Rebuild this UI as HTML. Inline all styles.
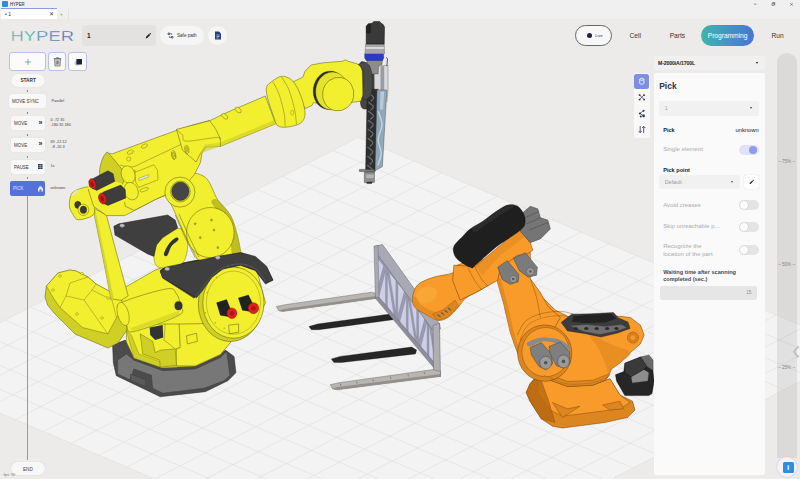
<!DOCTYPE html>
<html lang="en">
<head>
<meta charset="utf-8">
<title>HYPER</title>
<style>
*{box-sizing:border-box;margin:0;padding:0}
html,body{width:800px;height:479px;overflow:hidden}
body{background:#ecebea;font-family:"Liberation Sans","DejaVu Sans",sans-serif;color:#2c3345;position:relative}
.abs{position:absolute}
#titlebar{left:0;top:0;width:800px;height:19px;background:#f0f0f0}
#apptitle{left:10px;top:1px;font-size:4.9px;line-height:7px;color:#222;transform:scaleX(.86);transform-origin:0 0}
#appicon{left:2px;top:1px;width:6px;height:6px;background:#2f8fd6;border-radius:1px}
#tab{left:1px;top:8px;width:56px;height:11px;background:#fff;border-top:1px solid #8e9be0}
#tab span{position:absolute;left:4px;top:1px;font-size:5px;line-height:8px;color:#333}
#tabx{left:49px;top:10px;font-size:6px;line-height:8px;color:#444}
#tabplus{left:60px;top:10px;font-size:5px;line-height:8px;color:#999}
#tabsep{left:68px;top:9px;width:1px;height:10px;background:#e2e2e2}
.wc{top:1px;font-size:6px;line-height:7px;color:#333}
#scene{left:0;top:19px;width:800px;height:460px}
#logo{left:10px;top:28px;width:66px;height:15px}
#nameinput{left:82px;top:25px;width:74px;height:21px;background:#e3e2e1;border-radius:3px}
#nameinput span{position:absolute;left:5px;top:6px;font-size:6.5px;line-height:9px;font-weight:bold;color:#222}
#safepath{left:160px;top:26px;width:44px;height:19px;background:#f5f5f5;border-radius:10px}
#safepath span{position:absolute;left:17px;top:6.5px;font-size:4.6px;line-height:6px;color:#333}
#docbtn{left:208px;top:26px;width:19px;height:19px;background:#f5f5f5;border-radius:10px}
.sqbtn{top:52px;height:19px;background:#fbfbfb;border:1px solid #b9c0e6;border-radius:3px}
.node{background:#f8f8f8;border-radius:2px;font-size:5.2px;line-height:14px;color:#333;height:14px;box-shadow:0 0 1px rgba(0,0,0,.15)}
.node span{position:absolute;left:3px;top:0;font-size:5.6px;transform:scaleX(.8);transform-origin:0 50%;white-space:nowrap}
.pill{background:#f8f8f8;border-radius:7px;font-size:5.2px;line-height:13px;text-align:center;color:#222;box-shadow:0 0 1px rgba(0,0,0,.15)}
.ntxt{font-size:3.8px;line-height:5px;color:#444;white-space:pre}
.tick{left:27.200px;width:.6px;height:2.200px;background:#888}
#vline{left:27.100px;top:196px;width:.8px;height:264px;background:#9a9a9a}
.navtxt{top:29.8px;font-size:7.2px;line-height:12px;color:#333}
#live{left:575.3px;top:25.3px;width:36.6px;height:20.6px;border:.7px solid #666;border-radius:11px;background:#f7f7f7}
#prog{left:701px;top:25px;width:53px;height:21px;border-radius:11px;background:linear-gradient(90deg,#3fb5ad,#4a74d6);color:#fff;font-size:7.2px;line-height:21px;text-align:center}
#dd{left:653.5px;top:56px;width:111.5px;height:14px;background:#f0f0f0;border-radius:2px}
#dd span{position:absolute;left:4.6px;top:3.8px;font-weight:bold;letter-spacing:-.15px;font-size:5.2px;line-height:6px;color:#222}
#tools{left:634px;top:73px;width:15.6px;height:65px;background:#f8f8f8;border-radius:2px}
#panel{left:653.700px;top:73px;width:111px;height:402px;background:rgba(250,250,250,.96);border-radius:2px}
#slider{left:777px;top:53px;width:19.700px;height:405px;background:rgba(105,105,105,.125);border-radius:9.800px 9.800px 0 0}
.pct{left:771.6px;font-size:4.6px;line-height:5px;color:#858585;width:30px;text-align:center}
#info{left:782.500px;top:461.800px;width:11px;height:11px;background:#2a8fe6;border-radius:1.500px;color:#fff;font-size:8px;font-weight:bold;line-height:11px;text-align:center}
.plabel{font-size:5.6px;line-height:7px;color:#222}
.pgray{font-size:6px;line-height:7px;color:#aaa}
.toggle{width:20px;height:10px;border-radius:5px;background:#e4e4e4}
.toggle i{position:absolute;left:1px;top:1px;width:8px;height:8px;border-radius:4px;background:#fff;box-shadow:0 0 1px rgba(0,0,0,.3)}

.ic{position:absolute;left:28px;top:-0.5px;font-size:7px;font-weight:bold;color:#1f2a44;font-style:normal}
#live i{position:absolute;left:11px;top:7px;width:5px;height:5px;border-radius:3px;background:#1d2440}
#live span{position:absolute;left:19px;top:7px;font-size:4px;line-height:6px;color:#333}
.caret{position:absolute;width:0;height:0;border-left:1.800px solid transparent;border-right:1.800px solid transparent;border-top:2.200px solid #111}
.sel{background:#f1f1f1;border-radius:2px}
.sel span{position:absolute;left:6px;top:4.200px;font-size:5.400px;line-height:6px;color:#999}
.pill span{display:inline-block;font-size:5.6px;transform:scaleX(.84);font-weight:bold;color:#333}
.navtxt,#prog span{transform:scaleX(.92)}
#prog span{display:inline-block}
</style>
</head>
<body>
<div id="scene" class="abs">
<svg id="scenesvg" width="800" height="460" viewBox="0 19 800 460">
<!--GRID-->
<polygon fill="#f3f3f3" points="358.0,137.4 860.1,350.5 405.6,585.8 -95.7,372.3"/>
<path d="M358.0 137.4L-95.7 372.3M385.9 149.2L-67.9 384.2M413.7 161.0L-40.1 396.0M441.6 172.9L-12.3 407.8M469.4 184.7L15.5 419.7M497.3 196.5L43.4 431.5M525.2 208.3L71.2 443.4M553.1 220.2L99.1 455.2M581.0 232.0L126.9 467.1M608.8 243.8L154.7 479.0M636.7 255.7L182.6 490.8M664.6 267.5L210.5 502.7M692.6 279.4L238.3 514.5M720.5 291.2L266.2 526.4M748.4 303.1L294.1 538.3M776.3 314.9L322.0 550.2M804.2 326.8L349.8 562.0M832.2 338.6L377.7 573.9M860.1 350.5L405.6 585.8M358.0 137.4L860.1 350.5M332.8 150.4L834.8 363.5M307.6 163.5L809.6 376.6M282.4 176.5L784.3 389.7M257.2 189.6L759.1 402.8M232.0 202.6L733.8 415.8M206.8 215.7L708.6 428.9M181.6 228.8L683.4 442.0M156.3 241.8L658.1 455.1M131.1 254.9L632.9 468.1M105.9 267.9L607.6 481.2M80.7 281.0L582.4 494.3M55.5 294.0L557.1 507.3M30.3 307.1L531.9 520.4M5.1 320.1L506.6 533.5M-20.1 333.2L481.4 546.6M-45.3 346.2L456.1 559.6M-70.5 359.3L430.9 572.7M-95.7 372.3L405.6 585.8" stroke="#dcdcdc" stroke-width="0.55" fill="none"/>
<!--/GRID-->
<!--YELLOW-->
<path d="M360.2 63.9C361.2 59.3 364.4 62.7 366.2 62.8C367.9 62.9 369.4 63.6 370.7 64.6C371.9 65.7 373.1 63.4 373.7 69.1C374.2 74.9 374.5 92.9 374 99.2C373.5 105.5 372.2 105.1 370.7 106.7C369.1 108.4 366.3 109.2 364.7 109C363 108.7 361.7 108.4 360.9 105.2C360.1 102.1 360 97.1 359.8 90.2C359.7 83.3 359.1 68.4 360.2 63.9Z" fill="#454545" stroke="#222" stroke-width="0.5" stroke-linejoin="round"/>
<path d="M374.4 66.1L388 65.4L388 90.2L386.9 101.5L374.4 101.5Z" fill="#d9dadc" stroke="#555" stroke-width="0.4" stroke-linejoin="round"/>
<path d="M380.5 66.1L384.2 66.1L384.2 101.5L380.5 101.5Z" fill="#9a9ca0"/>
<path d="M366.9 59.8L382.4 59.8L382 64.6L378.5 65.8L378.2 73.9L369.9 73.9L369.6 65.8L366.9 64.6Z" fill="#8c8c8c" stroke="#444" stroke-width="0.4" stroke-linejoin="round"/>
<path d="M364.7 53.8L383.5 53.8L383.8 57.9L382.4 60.4L366.2 60.4L364.7 57.9Z" fill="#2b3cc4" stroke="#1a237e" stroke-width="0.4" stroke-linejoin="round"/>
<path d="M365.6 44L384.2 44L384.5 53.8L365 53.8Z" fill="#a6a6a6" stroke="#555" stroke-width="0.4" stroke-linejoin="round"/>
<path d="M365.6 46.9L384.2 46.9L384.2 49L365.6 49Z" fill="#d8d8d8"/>
<path d="M366.2 26.3L368.4 23.7L372.2 23.3L373.7 21.6L379.7 21.6L381.2 23.3L383 24.3L384.5 27L384.2 44L366.2 44Z" fill="#3a3a3a" stroke="#111" stroke-width="0.5" stroke-linejoin="round"/>
<path d="M366.2 26.3L368.4 23.7L370.7 24L371 33L368.4 33.8L366.2 33Z" fill="#222"/>
<path d="M386 57.4L387.5 58.6L386.9 66.1" fill="none" stroke="#333" stroke-width="0.8" stroke-linejoin="round"/>
<path d="M367.2 89.3L378.2 89.3L375.2 171.2L365.6 171.2Z" fill="#2e2e2e" stroke="#111" stroke-width="0.4" stroke-linejoin="round"/>
<path d="M368.4 93C369.3 93.8 373.3 96.2 373.7 97.6C374.1 98.9 371.2 100.7 370.7 101.3" fill="none" stroke="#8a8a8a" stroke-width="1.2" stroke-linejoin="round" opacity="0.7"/>
<path d="M368.3 102.1C369.1 102.8 373.2 105.2 373.5 106.6C373.9 108 371 109.7 370.5 110.3" fill="none" stroke="#8a8a8a" stroke-width="1.2" stroke-linejoin="round" opacity="0.7"/>
<path d="M368.1 111.1C369 111.8 373 114.2 373.4 115.6C373.8 117 370.9 118.7 370.4 119.4" fill="none" stroke="#8a8a8a" stroke-width="1.2" stroke-linejoin="round" opacity="0.7"/>
<path d="M368 120.1C368.8 120.9 372.9 123.2 373.2 124.6C373.6 126 370.7 127.8 370.2 128.4" fill="none" stroke="#8a8a8a" stroke-width="1.2" stroke-linejoin="round" opacity="0.7"/>
<path d="M367.8 129.1C368.7 129.9 372.7 132.3 373.1 133.6C373.5 135 370.6 136.8 370.1 137.4" fill="none" stroke="#8a8a8a" stroke-width="1.2" stroke-linejoin="round" opacity="0.7"/>
<path d="M367.7 138.2C368.5 138.9 372.6 141.3 372.9 142.7C373.3 144 370.4 145.8 369.9 146.4" fill="none" stroke="#8a8a8a" stroke-width="1.2" stroke-linejoin="round" opacity="0.7"/>
<path d="M367.5 147.2C368.4 147.9 372.4 150.3 372.8 151.7C373.2 153.1 370.3 154.8 369.8 155.5" fill="none" stroke="#8a8a8a" stroke-width="1.2" stroke-linejoin="round" opacity="0.7"/>
<path d="M367.4 156.2C368.2 157 372.3 159.3 372.6 160.7C373 162.1 370.1 163.8 369.6 164.5" fill="none" stroke="#8a8a8a" stroke-width="1.2" stroke-linejoin="round" opacity="0.7"/>
<path d="M367.2 165.2C368.1 166 372.1 168.4 372.5 169.7C372.9 171.1 370 172.9 369.5 173.5" fill="none" stroke="#8a8a8a" stroke-width="1.2" stroke-linejoin="round" opacity="0.7"/>
<path d="M377 90L386.9 90L382.4 166.7L375.2 170.5Z" fill="#8fa7b8" stroke="#3b4a55" stroke-width="0.4" stroke-linejoin="round"/>
<path d="M380.5 91.5L384.2 91.5L383 109.6L380 109.6Z" fill="#c4d4de" opacity="0.8"/>
<path d="M378.2 111.1C378.8 113.3 382 119.9 382 124.6C382 129.4 378.3 134.9 378.2 139.7C378.1 144.4 381.3 148.9 381.2 153.2C381.2 157.5 378.4 163.2 377.9 165.2" fill="none" stroke="#dbe6ec" stroke-width="1.5" stroke-linejoin="round" opacity="0.7"/>
<path d="M359.4 169.4L374.4 169.4L374.4 172.1L359.4 171.5Z" fill="#7d7d7d" stroke="#333" stroke-width="0.4" stroke-linejoin="round"/>
<path d="M364.4 172.1L374.4 172.1L374.4 182.3L364.4 182.6Z" fill="#8e8e8e" stroke="#333" stroke-width="0.4" stroke-linejoin="round"/>
<path d="M366.2 174.5L373.7 174.5L373.7 178.1L366.2 178.1Z" fill="#b5b5b5"/>
<path d="M366.2 181.9L372.5 181.6L371.9 183.8L366.8 183.8Z" fill="#333"/>
<path d="M112.6 345.1L125.1 340.1L130.1 345.1L220.4 353.9L225.4 350.1L234.1 356.4L235.9 372.7L227.9 380.7L205.3 391.7L160.2 396.7L116.3 375.7L113.3 362.7Z" fill="#4b4b4b" stroke="#2a2a2a" stroke-width="0.5" stroke-linejoin="round"/>
<path d="M126.4 353.9L133.9 360.2L162.7 370.7L195.3 368.9L220.4 357.6L226.6 351.4L229.9 375.2L224.1 380.7L204.1 388.2L162.7 393.2L152.7 388.2L151.4 375.2L133.9 368.9L130.1 379.7L117.6 373.9L117.6 360.2Z" fill="#777" stroke="#333" stroke-width="0.4" stroke-linejoin="round"/>
<path d="M130.1 373.9L145.2 379.7L145.7 386.5L130.9 380.7Z" fill="#5a5a5a" stroke="#333" stroke-width="0.3" stroke-linejoin="round"/>
<path d="M126.4 315L230.4 315L230.4 342.6L225.4 348.1L220.4 354.4L195.3 365.9L162.7 367.9L133.9 358.1L126.4 341.9Z" fill="#f1ef2e" stroke="#56560c" stroke-width="0.5" stroke-linejoin="round"/>
<path d="M126.4 330.1L133.9 358.1L162.7 367.9L195.3 365.9L220.4 354.4L216.6 351.4L194 361.4L164 363.2L138.9 353.9L131.4 335.1Z" fill="#cfcf25" stroke="#56560c" stroke-width="0.3" stroke-linejoin="round"/>
<path d="M140.2 333.8L152.7 341.4L155.2 352.6L160.7 350.1L175.2 348.9L176.5 365.2L160.2 367.2L159.7 360.2L142.7 353.9Z" fill="#cfcf25" stroke="#56560c" stroke-width="0.4" stroke-linejoin="round"/>
<path d="M149.7 327.6L162.7 325.1L163.2 337.6L155.2 340.1L150.2 335.1Z" fill="#333"/>
<path d="M165.2 323.8L179 320.1L180.3 347.6L175.2 348.9L164 340.1Z" fill="#f1ef2e" stroke="#56560c" stroke-width="0.4" stroke-linejoin="round"/>
<path d="M179 320.1L235.4 320.1L230.4 342.6L220.4 354.4L195.3 365.9L176.5 365.7L176.5 348.9L180.3 347.6Z" fill="#f1ef2e" stroke="#56560c" stroke-width="0.4" stroke-linejoin="round"/>
<path d="M186.5 335.8L196.5 333.3L197.3 341.4L187.3 343.9Z" fill="none" stroke="#56560c" stroke-width="0.5" stroke-linejoin="round"/>
<path d="M228.6 325.1L238.6 323.8L238.6 332.1L229.4 333.6Z" fill="none" stroke="#56560c" stroke-width="0.5" stroke-linejoin="round"/>
<path d="M58 273L70 270L76 271L88 277L96 284L118 296L126 305L127 330L118 343L108 348L75 334L54 313L47.6 305L45 297L46.4 286Z" fill="#cfcf25" stroke="#56560c" stroke-width="0.5" stroke-linejoin="round"/>
<path d="M58 273L70 270L76 271L88 277L96 284L118 296L126 305L116.5 317.6L107.8 333.9L82.7 327.6L60 307.6L54 299L46.4 286Z" fill="#f1ef2e" stroke="#56560c" stroke-width="0.4" stroke-linejoin="round"/>
<path d="M60 307.6L66 296L84 300L107.8 333.9" fill="none" stroke="#56560c" stroke-width="0.35" stroke-linejoin="round"/>
<path d="M66 296L70 283L88 277" fill="none" stroke="#56560c" stroke-width="0.35" stroke-linejoin="round"/>
<path d="M84 300L92 290L112 300L116.5 317.6" fill="none" stroke="#56560c" stroke-width="0.35" stroke-linejoin="round"/>
<path d="M92 290L96 284" fill="none" stroke="#56560c" stroke-width="0.35" stroke-linejoin="round"/>
<ellipse cx="60" cy="276" rx="1.5" ry="1.2" fill="#f1ef2e" stroke="#56560c" stroke-width="0.3"/>
<ellipse cx="53" cy="290" rx="1.5" ry="1.2" fill="#f1ef2e" stroke="#56560c" stroke-width="0.3"/>
<ellipse cx="82" cy="273.5" rx="1.5" ry="1.2" fill="#f1ef2e" stroke="#56560c" stroke-width="0.3"/>
<ellipse cx="77" cy="314" rx="1.5" ry="1.2" fill="#f1ef2e" stroke="#56560c" stroke-width="0.3"/>
<ellipse cx="102" cy="318" rx="1.5" ry="1.2" fill="#f1ef2e" stroke="#56560c" stroke-width="0.3"/>
<ellipse cx="108" cy="298" rx="1.5" ry="1.2" fill="#f1ef2e" stroke="#56560c" stroke-width="0.3"/>
<path d="M120.1 290.1L155.2 270.1L165.2 266.3L216.6 256.3L255.4 265.1L265.5 302.7L255.4 322.7L180.3 324L126.4 324L123.9 315.2Z" fill="#f1ef2e" stroke="#56560c" stroke-width="0.5" stroke-linejoin="round"/>
<path d="M121.4 302.7C129.1 298.7 157.3 290.3 166.5 288.9C175.7 287.4 174.2 291.2 176.5 293.9C178.8 296.6 179.8 301.6 180.3 305.2C180.7 308.7 186.7 310.8 179 315.2C171.3 319.6 142.7 329.8 133.9 331.5C125.1 333.1 128.7 328.3 126.4 325.2C124.1 322.1 120.9 316.4 120.1 312.7C119.3 308.9 113.6 306.6 121.4 302.7Z" fill="#f1ef2e" stroke="#56560c" stroke-width="0.5" stroke-linejoin="round"/>
<path d="M130.1 328.2L179 310.7L179 315.2L133.9 331.5Z" fill="#cfcf25" opacity="0.6"/>
<ellipse cx="123.1" cy="313.9" rx="5.5" ry="12" fill="#f1ef2e" transform="rotate(-15 123.1 313.9)" stroke="#56560c" stroke-width="0.4"/>
<ellipse cx="178.5" cy="305.7" rx="3.8" ry="4.3" fill="#333" stroke="#111" stroke-width="0.3"/>
<ellipse cx="230.4" cy="303.9" rx="32.1" ry="37.6" fill="#cfcf25" stroke="#56560c" stroke-width="0.5"/>
<ellipse cx="233.4" cy="302.7" rx="30.6" ry="35.6" fill="#f1ef2e" stroke="#56560c" stroke-width="0.5"/>
<path d="M160.2 270.6L165.2 266.6L216.6 256.5L240.4 252.5L255.4 257.5L266.7 267.6L273 280.1L265.5 284.1L255.4 270.6L240.4 265.1L222.9 267.6L210.3 277.6L200.3 292.6L194 298.1L162.7 278.1Z" fill="#3f3f3f" stroke="#1e1e1e" stroke-width="0.5" stroke-linejoin="round"/>
<ellipse cx="167.2" cy="269.6" rx="2.5" ry="1.8" fill="#bbb" stroke="#555" stroke-width="0.3"/>
<ellipse cx="217.3" cy="258" rx="2.5" ry="1.8" fill="#bbb" stroke="#555" stroke-width="0.3"/>
<path d="M216.6 302.7L226.6 299.6L230.4 308.9L227.9 316.4L220.4 315.2Z" fill="#222" stroke="#000" stroke-width="0.3" stroke-linejoin="round"/>
<path d="M238.4 298.1L248.4 295.1L252.9 303.9L250.4 311.4L242.4 310.2Z" fill="#222" stroke="#000" stroke-width="0.3" stroke-linejoin="round"/>
<ellipse cx="231.9" cy="313.2" rx="5" ry="5.3" fill="#e01f1f" stroke="#7a0c0c" stroke-width="0.4"/>
<ellipse cx="253.4" cy="308.2" rx="5.3" ry="5.5" fill="#e01f1f" stroke="#7a0c0c" stroke-width="0.4"/>
<ellipse cx="231.9" cy="313.2" rx="2.3" ry="2.3" fill="#b01515"/>
<ellipse cx="253.4" cy="308.2" rx="2.3" ry="2.3" fill="#b01515"/>
<path d="M228.6 325.2L238.6 324L238.6 332.2L229.4 333.7Z" fill="none" stroke="#56560c" stroke-width="0.5" stroke-linejoin="round"/>
<path d="M153.9 256.4C153.9 253 154.9 248.2 156.4 245.1C157.9 242 159.5 240.3 162.7 237.6C165.8 234.9 171.6 229.9 175.2 228.8C178.7 227.8 181.9 228.6 184 231.3C186 234 187.9 239.9 187.7 245.1C187.5 250.3 186.5 258.9 182.7 262.7C178.9 266.4 169.5 267.2 165.2 267.7C160.8 268.2 158.3 267.5 156.4 265.7C154.5 263.8 153.9 259.8 153.9 256.4Z" fill="#f1ef2e" stroke="#56560c" stroke-width="0.4" stroke-linejoin="round"/>
<path d="M163.9 253.9C164.2 251.9 166.8 246.6 168.9 243.9C171 241.1 174.9 238.2 176.4 237.6C178 237 179 238.6 178.2 240.1C177.4 241.6 173.3 243.8 171.4 246.4C169.6 249 168.4 254.4 167.2 255.6C165.9 256.9 163.6 255.8 163.9 253.9Z" fill="#333"/>
<path d="M113.8 226.3L118.8 223.8L167.7 215L175.2 220.1L177.7 228.1L162.7 237.6L156.4 245.1L153.9 256.4L147.6 253.9L115 235.1Z" fill="#3f3f3f" stroke="#1e1e1e" stroke-width="0.5" stroke-linejoin="round"/>
<ellipse cx="122.1" cy="225.6" rx="2.5" ry="1.8" fill="#bbb" stroke="#555" stroke-width="0.3"/>
<path d="M162.7 179.9C165.5 176.2 175.6 172.8 182.7 172.4C189.8 172 199.4 172.8 205.3 177.4C211.1 182 213.6 193.7 217.8 200C222 206.3 227.2 209.6 230.3 215C233.5 220.5 234.9 226.7 236.6 232.6C238.3 238.4 239.9 246.5 240.4 250.1C240.8 253.7 243.1 253 239.3 254.1C235.6 255.2 224.3 255.6 217.8 256.6C211.3 257.7 204.4 261.7 200.3 260.7C196.1 259.6 195.7 255.2 192.7 250.1C189.8 245 186 237.2 182.7 230.1C179.4 223 175.5 213.4 172.7 207.5C169.8 201.7 167.3 199.6 165.7 195C164 190.4 159.8 183.7 162.7 179.9Z" fill="#f1ef2e" stroke="#56560c" stroke-width="0.5" stroke-linejoin="round"/>
<path d="M217.8 200C220.9 202.1 227.2 209.6 230.3 215C233.5 220.5 234.9 226.7 236.6 232.6C238.3 238.4 239.9 246.5 240.4 250.1C240.8 253.7 240.7 253.4 239.3 254.1C238 254.9 233.9 257.8 232.3 254.6C230.7 251.5 231.4 241.1 229.8 235.1C228.2 229.1 225.9 224.2 222.8 218.8C219.8 213.4 212.4 205.6 211.5 202.5C210.7 199.4 214.7 197.9 217.8 200Z" fill="#a9aa1c" opacity="0.7"/>
<ellipse cx="210.3" cy="232.6" rx="23.8" ry="25.1" fill="#f1ef2e" stroke="#56560c" stroke-width="0.5"/>
<ellipse cx="195.2" cy="223.8" rx="1" ry="1" fill="#a9aa1c" stroke="#56560c" stroke-width="0.3"/>
<ellipse cx="200.3" cy="237.6" rx="1" ry="1" fill="#a9aa1c" stroke="#56560c" stroke-width="0.3"/>
<ellipse cx="211.5" cy="220.1" rx="1" ry="1" fill="#a9aa1c" stroke="#56560c" stroke-width="0.3"/>
<ellipse cx="217.8" cy="247.6" rx="1" ry="1" fill="#a9aa1c" stroke="#56560c" stroke-width="0.3"/>
<ellipse cx="214" cy="230.1" rx="1" ry="1" fill="#a9aa1c" stroke="#56560c" stroke-width="0.3"/>
<path d="M175.2 215C176.9 218.8 181.9 230.5 185.2 237.6C188.6 244.7 193.6 254.3 195.2 257.6" fill="none" stroke="#56560c" stroke-width="0.5" stroke-linejoin="round"/>
<path d="M178.9 213.8C180.6 217.5 185.6 229.1 189 236.3C192.3 243.6 197.3 253.7 199 257.1" fill="none" stroke="#56560c" stroke-width="0.5" stroke-linejoin="round"/>
<path d="M160.2 271.4L165.2 267.2L217.8 256.4L240.4 252.6L255.4 256.4L266.7 266.4L272.9 280.2L265.4 282.7L255.4 270.2L240.4 265.2L222.8 268.9L211.5 277.7L202.8 290.2L196.5 297.7L162.7 277.7Z" fill="#3f3f3f" stroke="#1e1e1e" stroke-width="0.5" stroke-linejoin="round"/>
<ellipse cx="167.2" cy="268.9" rx="2.5" ry="1.8" fill="#bbb" stroke="#555" stroke-width="0.3"/>
<ellipse cx="217.8" cy="257.6" rx="2.5" ry="1.8" fill="#bbb" stroke="#555" stroke-width="0.3"/>
<path d="M92.9 207.8L106.4 214.9L116.2 252L128.2 295.8L121.4 300.3L110.9 298.8L101.9 252Z" fill="#f1ef2e" stroke="#56560c" stroke-width="0.5" stroke-linejoin="round"/>
<path d="M92.9 207.8L95.1 208.6L104.1 252L113.9 299.1L110.9 298.8L101.9 252Z" fill="#cfcf25" opacity="0.8"/>
<path d="M70.3 197.3C71.1 194.7 71.2 193 74.1 191.3C76.9 189.5 84.1 187 87.6 186.8C91.1 186.5 93.1 188.1 95.1 189.8C97.1 191.4 99.6 193.9 99.6 196.5C99.6 199.2 96.2 202.4 95.1 205.6C94 208.7 95.6 213 92.9 215.3C90.1 217.7 81.8 219.9 78.6 219.8C75.3 219.8 74.8 217 73.3 214.9C71.8 212.8 70.1 210 69.5 207.1C69 204.1 69.5 199.9 70.3 197.3Z" fill="#f1ef2e" stroke="#56560c" stroke-width="0.5" stroke-linejoin="round"/>
<ellipse cx="77.8" cy="204.8" rx="3.2" ry="3.6" fill="#3a3a3a" stroke="#222" stroke-width="0.3"/>
<ellipse cx="83.4" cy="209.8" rx="5.4" ry="5.7" fill="#f1ef2e" stroke="#56560c" stroke-width="0.4"/>
<ellipse cx="83.4" cy="209.8" rx="3.3" ry="3.8" fill="#3a3a3a" stroke="#222" stroke-width="0.3"/>
<path d="M71.1 195L74.8 190.5L80.1 189.3L78.6 192.8L72.6 196.2Z" fill="#e8e6b0" opacity="0.8"/>
<path d="M88.3 189.6L99.6 185.1L128.2 197.1L155.3 197.1L185.3 185.1L185.3 187.5L170 193.5L155.3 199.5L128.2 213.8L124.4 215.6L106.4 215.6L93.6 206.3Z" fill="#f1ef2e" stroke="#56560c" stroke-width="0.5" stroke-linejoin="round"/>
<path d="M106.4 152.8L112.4 153.8L127.4 148.3L150 140L177.1 130.2L192.9 125L209.4 120.5L215.4 131L206.4 146L201.9 153.5L200.4 162.6L194.4 174.6L185.3 185.1L170.3 192.6L155.3 199.5L134.2 210.4L125.2 206.2L122.2 185.1L120.7 170.1Z" fill="#f1ef2e" stroke="#56560c" stroke-width="0.5" stroke-linejoin="round"/>
<path d="M106.4 152.8C107.6 152 106.8 151.4 109.4 154.3C112 157.2 119.7 165.9 122.2 170.1C124.6 174.3 124.2 176.8 124 179.4C123.8 182 122.5 184.7 121 185.4C119.4 186.2 117.8 184.9 114.7 183.9C111.5 182.9 104.4 181.6 101.9 179.4C99.4 177.2 99.5 174.2 99.6 170.8C99.7 167.5 101.2 162.3 102.3 159.2C103.5 156.2 105.2 153.6 106.4 152.8Z" fill="#cfcf25" stroke="#56560c" stroke-width="0.5" stroke-linejoin="round"/>
<path d="M120.1 165C122.1 165.3 127.3 167.8 132 167C136.6 166.1 142.7 162.4 148 160C153.4 157.6 158.7 155 164 152.5C169.3 150 174.6 147.5 179.9 145C185.2 142.5 190.6 140 195.9 137.5C201.2 135 209.1 131.2 211.8 130" fill="none" stroke="#56560c" stroke-width="0.4" stroke-linejoin="round"/>
<path d="M122.3 175.4L135.1 170.1L135.1 179.1" fill="none" stroke="#56560c" stroke-width="0.35" stroke-linejoin="round"/>
<ellipse cx="130.3" cy="152.1" rx="3.3" ry="1.8" fill="#f1ef2e" transform="rotate(-25 130.3 152.1)" stroke="#56560c" stroke-width="0.35"/>
<ellipse cx="144.4" cy="146.1" rx="3.3" ry="1.8" fill="#f1ef2e" transform="rotate(-25 144.4 146.1)" stroke="#56560c" stroke-width="0.35"/>
<ellipse cx="128.8" cy="159" rx="2.1" ry="2.1" fill="#f1ef2e" stroke="#56560c" stroke-width="0.35"/>
<ellipse cx="173.8" cy="155.5" rx="2" ry="4.2" fill="#f1ef2e" transform="rotate(-12 173.8 155.5)" stroke="#56560c" stroke-width="0.4"/>
<ellipse cx="173.8" cy="155.5" rx="0.9" ry="2.6" fill="#cfcf25" transform="rotate(-12 173.8 155.5)" stroke="#56560c" stroke-width="0.3"/>
<ellipse cx="186.5" cy="150" rx="2" ry="4.2" fill="#f1ef2e" transform="rotate(-12 186.5 150)" stroke="#56560c" stroke-width="0.4"/>
<ellipse cx="186.5" cy="150" rx="0.9" ry="2.6" fill="#cfcf25" transform="rotate(-12 186.5 150)" stroke="#56560c" stroke-width="0.3"/>
<ellipse cx="144.1" cy="189.7" rx="4.5" ry="1.7" fill="#f1ef2e" transform="rotate(-20 144.1 189.7)" stroke="#56560c" stroke-width="0.35"/>
<ellipse cx="128.2" cy="174.6" rx="6.8" ry="9" fill="#f1ef2e" transform="rotate(-20 128.2 174.6)" stroke="#56560c" stroke-width="0.4"/>
<ellipse cx="131.2" cy="191.1" rx="6.8" ry="9" fill="#f1ef2e" transform="rotate(-20 131.2 191.1)" stroke="#56560c" stroke-width="0.4"/>
<path d="M135 172.3L153.8 164.8L157.5 170.1L158 179.8L138.7 187.4L135.7 182.1Z" fill="#f1ef2e" stroke="#56560c" stroke-width="0.4" stroke-linejoin="round"/>
<path d="M138.7 178.3L148.5 174.6L148.9 176.8L139.2 180.6Z" fill="#e9e9d0" stroke="#444" stroke-width="0.3" stroke-linejoin="round"/>
<path d="M87.6 185.1L101.9 178.3L122.2 183.6L128.2 200.2L110.2 208.4L95.1 203.2Z" fill="#f1ef2e"/>
<path d="M93.6 178.3L107.9 170.8L113.2 173.8L114.7 181.4L96.6 190.4L89.8 186.6L88.8 181.4Z" fill="#3d3d3d" stroke="#1a1a1a" stroke-width="0.4" stroke-linejoin="round"/>
<ellipse cx="92.6" cy="183.9" rx="3.3" ry="5.4" fill="#d21e1e" transform="rotate(-20 92.6 183.9)" stroke="#6d0b0b" stroke-width="0.4"/>
<ellipse cx="92.1" cy="184.2" rx="1.5" ry="2.7" fill="#a01212" transform="rotate(-20 92.1 184.2)"/>
<path d="M103.4 191.9L120.7 185.1L125.2 189.6L125.9 197.9L107.9 205.4L100.4 201.7L98.9 196.4Z" fill="#3d3d3d" stroke="#1a1a1a" stroke-width="0.4" stroke-linejoin="round"/>
<ellipse cx="102.6" cy="198.6" rx="3.8" ry="5.7" fill="#d21e1e" transform="rotate(-20 102.6 198.6)" stroke="#6d0b0b" stroke-width="0.4"/>
<ellipse cx="102.2" cy="198.9" rx="1.7" ry="2.9" fill="#a01212" transform="rotate(-20 102.2 198.9)"/>
<ellipse cx="179.9" cy="192.1" rx="15" ry="15" fill="#f1ef2e" stroke="#56560c" stroke-width="0.5"/>
<ellipse cx="180.4" cy="191.5" rx="9.9" ry="10.5" fill="#cfcf25" stroke="#56560c" stroke-width="0.4"/>
<ellipse cx="180.4" cy="191.3" rx="8.6" ry="9.2" fill="#454545" stroke="#222" stroke-width="0.4"/>
<path d="M176.5 129.4L209.6 120.8L223.2 114.1L265.3 96L274.3 120.1L275.8 123.8L220.2 146.4L205.1 147.1L200.6 153.2L196.1 162L182.6 150.2Z" fill="#f1ef2e" stroke="#56560c" stroke-width="0.5" stroke-linejoin="round"/>
<path d="M220.2 146.4L275.8 123.8L274.3 120.1L220.2 142.6L205.1 144.4L200.6 153.2Z" fill="#cfcf25" opacity="0.6"/>
<path d="M209.6 120.8C210.6 122.2 213.9 126 215.6 129.1C217.4 132.2 219.4 136.7 220.2 139.6C220.9 142.5 220.2 145.3 220.2 146.4" fill="none" stroke="#56560c" stroke-width="0.5" stroke-linejoin="round"/>
<path d="M176.5 129.4C177.5 130.4 180.9 133.2 182.6 135.1C184.2 137.1 180.6 140.8 186.3 141.1C192.1 141.5 211.5 137.6 217.1 137.4C222.8 137.1 219.6 139.2 220.2 139.6" fill="none" stroke="#56560c" stroke-width="0.4" stroke-linejoin="round"/>
<ellipse cx="224.7" cy="116.3" rx="3.6" ry="2.1" fill="#f1ef2e" transform="rotate(40 224.7 116.3)" stroke="#56560c" stroke-width="0.4"/>
<ellipse cx="238.2" cy="110" rx="3.6" ry="2.1" fill="#f1ef2e" transform="rotate(40 238.2 110)" stroke="#56560c" stroke-width="0.4"/>
<ellipse cx="173.5" cy="154.7" rx="2.1" ry="4.2" fill="#f1ef2e" transform="rotate(-10 173.5 154.7)" stroke="#56560c" stroke-width="0.4"/>
<ellipse cx="173.5" cy="154.7" rx="1.1" ry="2.7" fill="#cfcf25" transform="rotate(-10 173.5 154.7)" stroke="#56560c" stroke-width="0.3"/>
<ellipse cx="186.8" cy="149.4" rx="2.1" ry="4.2" fill="#f1ef2e" transform="rotate(-10 186.8 149.4)" stroke="#56560c" stroke-width="0.4"/>
<ellipse cx="186.8" cy="149.4" rx="1.1" ry="2.7" fill="#cfcf25" transform="rotate(-10 186.8 149.4)" stroke="#56560c" stroke-width="0.3"/>
<path d="M292.3 82.3L302.9 77.1L305.1 71.1L311.1 65L323.2 62.8L342 61.3L345.7 59.8L348 61.3L356.2 63.5L360 65L362.3 71.1L363 95.1L360.8 101.1L350.2 102.6L323.2 104.1L313.4 102.6L311.9 105.6L305.1 108.6L297.6 95.1Z" fill="#f1ef2e" stroke="#56560c" stroke-width="0.5" stroke-linejoin="round"/>
<path d="M266.4 87.6C267.2 84.4 270.2 82.7 272.7 80.9C275.2 79 278.5 76.7 281.5 76.3C284.4 76 287.7 77.2 290.2 78.8C292.7 80.5 294.6 83.2 296.5 86.4C298.4 89.5 300.1 93.7 301.5 97.6C302.9 101.6 304.3 106.6 304.8 110.2C305.2 113.7 305 116.6 304 118.9C303 121.2 301.7 122.6 299 124C296.3 125.3 291.3 126.7 287.7 127C284.2 127.3 280.1 127.7 277.7 125.7C275.3 123.8 274.8 119.4 273.2 115.2C271.6 110.9 269.3 104.7 268.2 100.2C267 95.6 265.7 90.8 266.4 87.6Z" fill="#f1ef2e" stroke="#56560c" stroke-width="0.5" stroke-linejoin="round"/>
<path d="M272.7 81.4C273.7 83.4 277.1 88.7 278.9 93.9C280.8 99.1 282.9 107.3 284 112.7C285 118.1 285 124.2 285.2 126.5" fill="none" stroke="#56560c" stroke-width="0.4" stroke-linejoin="round"/>
<path d="M281.5 76.8C282.7 79.1 286.8 84.6 289 90.1C291.2 95.7 293.5 104.4 294.7 110.2C296 115.9 296.2 122.3 296.5 124.7" fill="none" stroke="#56560c" stroke-width="0.4" stroke-linejoin="round"/>
<ellipse cx="292.2" cy="112.7" rx="1.5" ry="2.5" fill="#f1ef2e" stroke="#56560c" stroke-width="0.3"/>
<ellipse cx="329.5" cy="90.3" rx="16.2" ry="19.2" fill="#2b2b2b" transform="rotate(8 329.5 90.3)" stroke="#111" stroke-width="0.3"/>
<ellipse cx="331.9" cy="90.9" rx="16.2" ry="18.9" fill="#e4e22a" transform="rotate(8 331.9 90.9)" stroke="#56560c" stroke-width="0.4"/>
<ellipse cx="338.2" cy="94.1" rx="15.6" ry="16.8" fill="#f1ef2e" transform="rotate(10 338.2 94.1)" stroke="#56560c" stroke-width="0.5"/>
<path d="M358.5 64.3C358.9 62.9 363.4 62.4 365.3 62.8C367.1 63.2 368.6 64.4 369.8 66.5C370.9 68.7 371.7 71.8 372 75.6C372.4 79.3 372.4 85.6 372 89.1C371.7 92.6 370.9 94.9 369.8 96.6C368.6 98.4 366.6 99.4 365.3 99.6C363.9 99.9 361.9 98.9 361.5 98.1C361.1 97.4 362.8 99.6 363 95.1C363.3 90.6 363.8 76.2 363 71.1C362.3 65.9 358.1 65.7 358.5 64.3Z" fill="#4a4a4a" stroke="#222" stroke-width="0.4" stroke-linejoin="round"/>
<ellipse cx="233.4" cy="302.7" rx="27.1" ry="31.6" fill="none" stroke="#56560c" stroke-width="0.3"/>
<ellipse cx="215.3" cy="322.7" rx="0.8" ry="0.8" fill="#a9aa1c"/>
<ellipse cx="224.1" cy="328.2" rx="0.8" ry="0.8" fill="#a9aa1c"/>
<ellipse cx="205.3" cy="312.7" rx="0.8" ry="0.8" fill="#a9aa1c"/>
<ellipse cx="207.3" cy="292.6" rx="0.8" ry="0.8" fill="#a9aa1c"/>
<ellipse cx="216.6" cy="277.6" rx="0.8" ry="0.8" fill="#a9aa1c"/>
<path d="M195.8 295.6C197 294.1 200.2 289.7 202.8 286.4C205.4 283 208.2 278.8 211.6 275.6C215 272.4 218.6 269 223.4 267.1C228.2 265.1 235.1 263.7 240.4 264.1C245.7 264.4 251.3 266.1 255.4 269.1C259.5 272.1 263.4 279.9 265 282.1" fill="none" stroke="#9a9a9a" stroke-width="0.5" stroke-dasharray="0.4 0.9"/>
<path d="M198.2 295.2C199.2 293.9 201.6 290.5 204 287.2C206.4 284 209.6 278.9 212.8 275.7C216 272.5 218.7 270.1 223.3 268.2C227.9 266.2 235 263.8 240.4 263.9C245.7 264 251.2 266.1 255.4 268.9C259.6 271.7 263.7 278.7 265.4 280.7" fill="none" stroke="#9a9a9a" stroke-width="0.5" stroke-dasharray="0.4 0.9"/>
<!--/YELLOW-->
<!--FORK-->
<path d="M276.3 306.4L285.1 304.7L371.5 292.2L377.8 293.9L377.8 298.2L282.6 311.5L278.8 310.7Z" fill="#b9b6b1" stroke="#555" stroke-width="0.4" stroke-linejoin="round"/>
<path d="M278.8 310.7L282.6 309.2L377.8 295.7L377.8 298.2L282.6 311.5Z" fill="#8f8c88" opacity="0.9"/>
<path d="M308.9 326.5L317.6 324L390.3 314L394.1 316.5L392.8 319.7L318.9 329.7L311.4 329.7Z" fill="#262626" stroke="#000" stroke-width="0.3" stroke-linejoin="round"/>
<path d="M331.4 358.9L340.2 356.4L411.6 347.1L416.6 350.1L415.4 353.9L341.5 362.6L333.9 362.6Z" fill="#262626" stroke="#000" stroke-width="0.3" stroke-linejoin="round"/>
<path d="M375 250L439 327L439 372L376 297Z" fill="#9a9bb0" stroke="#4b4b55" stroke-width="0.4" stroke-linejoin="round"/>
<path d="M376.9 257.6L383.6 265.7L376.9 290.7Z" fill="#cdcfe6" stroke="#6b6b78" stroke-width="0.25" stroke-linejoin="round"/>
<path d="M385.5 271L385.5 305.4L378.8 297.3Z" fill="#cdcfe6" stroke="#6b6b78" stroke-width="0.25" stroke-linejoin="round"/>
<path d="M387.4 273.3L387.4 307.7L394 315.8Z" fill="#cdcfe6" stroke="#6b6b78" stroke-width="0.25" stroke-linejoin="round"/>
<path d="M389.2 272.5L395.9 280.6L395.9 313.7Z" fill="#cdcfe6" stroke="#6b6b78" stroke-width="0.25" stroke-linejoin="round"/>
<path d="M397.8 282.9L404.4 291L397.8 316Z" fill="#cdcfe6" stroke="#6b6b78" stroke-width="0.25" stroke-linejoin="round"/>
<path d="M406.3 296.3L406.3 330.7L399.6 322.6Z" fill="#cdcfe6" stroke="#6b6b78" stroke-width="0.25" stroke-linejoin="round"/>
<path d="M408.2 298.6L408.2 333L414.9 341.1Z" fill="#cdcfe6" stroke="#6b6b78" stroke-width="0.25" stroke-linejoin="round"/>
<path d="M410.1 297.9L416.7 306L416.7 339.1Z" fill="#cdcfe6" stroke="#6b6b78" stroke-width="0.25" stroke-linejoin="round"/>
<path d="M418.6 308.2L425.3 316.4L418.6 341.4Z" fill="#cdcfe6" stroke="#6b6b78" stroke-width="0.25" stroke-linejoin="round"/>
<path d="M427.1 321.6L427.1 356L420.5 347.9Z" fill="#cdcfe6" stroke="#6b6b78" stroke-width="0.25" stroke-linejoin="round"/>
<path d="M429 323.9L429 358.3L435.7 366.4Z" fill="#cdcfe6" stroke="#6b6b78" stroke-width="0.25" stroke-linejoin="round"/>
<path d="M430.9 323.2L437.6 331.3L437.6 364.4Z" fill="#cdcfe6" stroke="#6b6b78" stroke-width="0.25" stroke-linejoin="round"/>
<path d="M374 246.3L382.5 244.5L439.5 324L440.5 329L433 330.5L375.3 251.5Z" fill="#a9a9b5" stroke="#4b4b55" stroke-width="0.4" stroke-linejoin="round"/>
<path d="M375.5 293L439 368L439 374L375.5 298.5Z" fill="#8e8e9a" stroke="#4b4b55" stroke-width="0.3" stroke-linejoin="round"/>
<path d="M374 246.3L378 245.5L379 297.5L375.3 297.2Z" fill="#a9a9b4" stroke="#4b4b55" stroke-width="0.3" stroke-linejoin="round"/>
<path d="M433 325.5L439.5 323L440.5 376.4L433.5 375.7Z" fill="#b0aeb0" stroke="#4b4b55" stroke-width="0.4" stroke-linejoin="round"/>
<path d="M330.2 384.7L338.9 382.7L432.9 369.6L440.5 371.4L440.5 376.4L337.7 389.7L332.7 388.9Z" fill="#b9b6b1" stroke="#555" stroke-width="0.4" stroke-linejoin="round"/>
<path d="M332.7 388.9L336.4 387.2L440.5 373.9L440.5 376.4L337.7 389.7Z" fill="#8f8c88" opacity="0.9"/>
<path d="M340.2 383.5L341 386" fill="none" stroke="#555" stroke-width="0.5" stroke-linejoin="round"/>
<path d="M356.5 381.3L357.2 383.8" fill="none" stroke="#555" stroke-width="0.5" stroke-linejoin="round"/>
<path d="M372.8 379L373.5 381.5" fill="none" stroke="#555" stroke-width="0.5" stroke-linejoin="round"/>
<path d="M390.3 376.6L391.1 379.1" fill="none" stroke="#555" stroke-width="0.5" stroke-linejoin="round"/>
<path d="M407.9 374.1L408.6 376.6" fill="none" stroke="#555" stroke-width="0.5" stroke-linejoin="round"/>
<path d="M424.2 371.9L424.9 374.4" fill="none" stroke="#555" stroke-width="0.5" stroke-linejoin="round"/>
<!--/FORK-->
<!--ORANGE-->
<path d="M538.8 373.8L550 378.8L567.5 386.2L592.5 385L610 378.8L620 395L632.5 401.2L635 410L627.5 417.5L605 422.5L562.5 428L552.5 426.2L541.2 418.8L530 401.2L526.2 392.5L530 383.8Z" fill="#dd8620" stroke="#6e3d05" stroke-width="0.5" stroke-linejoin="round"/>
<path d="M538.8 373.8L550 378.8L567.5 386.2L592.5 385L610 378.8L620 395L630 402.5L620 408.8L562.5 416.2L550 410L537.5 392.5Z" fill="#f99b2a" stroke="#6e3d05" stroke-width="0.4" stroke-linejoin="round"/>
<path d="M552.5 402.5L567.5 408.8L580 406.2L562.5 417.5Z" fill="#dd8620" stroke="#6e3d05" stroke-width="0.4" stroke-linejoin="round"/>
<path d="M602.5 405L620 401.2L623.8 408.8L610 410Z" fill="#dd8620" stroke="#6e3d05" stroke-width="0.4" stroke-linejoin="round"/>
<path d="M530 383.8L538.8 373.8L547.5 397.5L555 422.5L541.2 418.8L530 401.2L526.2 392.5Z" fill="#b8680f" stroke="#6e3d05" stroke-width="0.4" stroke-linejoin="round" opacity="0.8"/>
<path d="M624.9 363.2L640.5 357L646.8 357L652 362.2L653.1 372.6L654.1 381L652 393.5L648.9 395.6L624.9 395.6L616.5 381L615.5 374.7L623.8 371.6Z" fill="#262626" stroke="#000" stroke-width="0.4" stroke-linejoin="round"/>
<path d="M631.1 376.8L643.7 369.5L648.9 372.6L647.8 381L632.2 383.1Z" fill="#8d8d8d" stroke="#333" stroke-width="0.3" stroke-linejoin="round"/>
<path d="M640.5 357L648.9 354.9L653.1 360.1L653.1 370.5L646.8 366.4Z" fill="#6a6a6a" stroke="#333" stroke-width="0.3" stroke-linejoin="round"/>
<path d="M624.9 363.2L640.5 357L646.8 366.4L643.7 369.5L631.1 376.8L624.9 372.6Z" fill="#3a3a3a" stroke="#111" stroke-width="0.3" stroke-linejoin="round"/>
<path d="M507.6 297.5L542.7 297.5L555.2 310L570.2 317.5L585.3 317.5L620.4 316.3L630.4 317.5L640.4 325.1L644.2 335.1L640.4 343.9L630.4 352.6L620.4 362.7L611.6 368.9L609.1 375.2L605.3 380.2L592.8 385.2L567.7 386.5L550.2 380.2L542.7 372.7L530.1 365.2L520.1 355.1L513.8 342.6L510.1 325.1L505.1 310Z" fill="#f99b2a" stroke="#6e3d05" stroke-width="0.5" stroke-linejoin="round"/>
<path d="M542.7 372.7L550.2 375.2L567.7 381.5L592.8 380.2L609.1 373.9L609.1 375.2L605.3 380.2L592.8 385.2L567.7 386.5L550.2 380.2Z" fill="#dd8620" stroke="#6e3d05" stroke-width="0.4" stroke-linejoin="round"/>
<path d="M590.3 335.1C592.4 334.5 603.6 340.9 610.3 343.9C617 346.8 628.7 349.5 630.4 352.6C632 355.8 623.5 359.9 620.4 362.7C617.2 365.4 613.5 366.8 611.6 368.9C609.7 371 610.1 376 609.1 375.2C608 374.4 607.2 368.5 605.3 363.9C603.4 359.3 600.3 352.4 597.8 347.6C595.3 342.8 588.2 335.7 590.3 335.1Z" fill="#dd8620" opacity="0.6"/>
<path d="M561.2 322.5L571.6 314.2L590.4 313.8L613.4 312.5L618.6 317.9L628 322.1L630.1 328.4L617.6 333L600.9 337.1L584.2 333.4L567.5 330.9Z" fill="#3c3c3c" stroke="#222" stroke-width="0.4" stroke-linejoin="round"/>
<path d="M573.7 316.3L590.4 314.6L611.3 313.8L616.5 318.4L605.1 322.5L584.2 322.9L571.6 321.5Z" fill="#222"/>
<path d="M569.6 325.7L586.3 324.6L605.1 326.3L621.8 324.6L627 327.7L615.5 331.3L599.8 334.6L584.2 331.7Z" fill="#6e6e6e" stroke="#333" stroke-width="0.3" stroke-linejoin="round"/>
<ellipse cx="575.8" cy="328.4" rx="2.1" ry="1.5" fill="#2a2a2a"/>
<ellipse cx="586.3" cy="328.4" rx="2.1" ry="1.5" fill="#2a2a2a"/>
<ellipse cx="596.7" cy="328.4" rx="2.1" ry="1.5" fill="#2a2a2a"/>
<ellipse cx="607.1" cy="328.4" rx="2.1" ry="1.5" fill="#2a2a2a"/>
<ellipse cx="616.5" cy="328.4" rx="2.1" ry="1.5" fill="#2a2a2a"/>
<ellipse cx="632.9" cy="337.6" rx="5.5" ry="5.5" fill="#dd8620" stroke="#6e3d05" stroke-width="0.4"/>
<ellipse cx="632.9" cy="337.6" rx="3" ry="3" fill="#f99b2a" stroke="#6e3d05" stroke-width="0.3"/>
<path d="M496.5 278.8L500.3 260L510.3 250L530.3 252.5L530.3 278.8L540.4 292.6L547.9 306.4L560.4 317.6L550.4 335.2L520.3 360.3L516.5 350.2L510.3 332.7L504 305.1Z" fill="#f99b2a" stroke="#6e3d05" stroke-width="0.5" stroke-linejoin="round"/>
<path d="M496.5 278.8L500.3 277.5L507.8 305.1L514 332.7L522.8 360.3L520.3 360.3L516.5 350.2L510.3 332.7L504 305.1Z" fill="#dd8620" opacity="0.8"/>
<path d="M530.3 278.8C531.4 281.9 534.9 291.1 536.6 297.6C538.3 304.1 539.7 314.3 540.4 317.6" fill="none" stroke="#6e3d05" stroke-width="0.4" stroke-linejoin="round"/>
<ellipse cx="544.7" cy="353.1" rx="27.1" ry="28.1" fill="#dd8620" stroke="#6e3d05" stroke-width="0.5"/>
<ellipse cx="545.7" cy="352.1" rx="23.8" ry="24.6" fill="#f99b2a" stroke="#6e3d05" stroke-width="0.4"/>
<path d="M527.6 342.6C529.7 341.1 537.2 338 542.7 337.6C548.1 337.2 555.6 338.4 560.2 340.1C564.8 341.8 569 345.9 570.2 347.6C571.5 349.3 569.8 350.8 567.7 350.1C565.6 349.5 561.9 345.3 557.7 343.9C553.5 342.4 547.3 340.9 542.7 341.4C538.1 341.8 532.6 346.2 530.1 346.4C527.6 346.6 525.5 344.1 527.6 342.6Z" fill="#8a8a8a"/>
<path d="M530.1 347.6L541.4 342.6L551.4 353.9L552.7 363.9L545.7 369.7L538.9 366.4L531.4 355.1Z" fill="#7f7f7f" stroke="#333" stroke-width="0.4" stroke-linejoin="round"/>
<path d="M548.9 346.4L560.2 342.1L569.7 352.6L570.2 362.7L564 368.2L556.4 365.7L550.2 353.9Z" fill="#7f7f7f" stroke="#333" stroke-width="0.4" stroke-linejoin="round"/>
<ellipse cx="545.7" cy="362.7" rx="6" ry="6.5" fill="#9a9a9a" stroke="#333" stroke-width="0.4"/>
<ellipse cx="563.5" cy="361.4" rx="6" ry="6.5" fill="#9a9a9a" stroke="#333" stroke-width="0.4"/>
<ellipse cx="545.7" cy="362.7" rx="1.8" ry="1.8" fill="#555"/>
<ellipse cx="563.5" cy="361.4" rx="1.8" ry="1.8" fill="#555"/>
<path d="M412.5 297.6C412.1 301.4 412.9 304.9 415 307.6C417.1 310.3 421.3 311.8 425.1 313.9C428.8 316 433.8 319.5 437.6 320.2C441.4 320.8 444.1 319.9 447.6 317.6C451.2 315.3 455.8 309.7 458.9 306.4C462 303 462.4 300.5 466.4 297.6C470.4 294.7 477.5 292.2 482.7 288.8C487.9 285.5 495.4 280.7 497.7 277.5C500 274.4 498.6 272.9 496.5 270C494.4 267.1 491.7 260.8 485.2 260C478.7 259.2 462.9 262.9 457.6 265C452.4 267.1 458.1 270.4 453.9 272.5C449.7 274.6 438.6 275.5 432.6 277.5C426.5 279.6 420.9 281.7 417.5 285.1C414.2 288.4 412.9 293.8 412.5 297.6Z" fill="#f99b2a" stroke="#6e3d05" stroke-width="0.5" stroke-linejoin="round"/>
<ellipse cx="426.3" cy="295.1" rx="11.3" ry="8" fill="#f7ad3e" transform="rotate(-25 426.3 295.1)" opacity="0.6"/>
<path d="M412.5 297.6C412.3 299.3 412.9 304.9 415 307.6C417.1 310.3 421.3 311.8 425.1 313.9C428.8 316 435.1 320.2 437.6 320.2C440.1 320.2 441.4 315.6 440.1 313.9C438.8 312.2 433.2 311.6 430.1 310.1C426.9 308.7 423.6 307.2 421.3 305.1C419 303 417.8 298.8 416.3 297.6C414.8 296.3 412.7 295.9 412.5 297.6Z" fill="#dd8620" opacity="0.7"/>
<path d="M437.6 320.2L447.6 317.6L458.9 306.4L455.1 300.1L442.6 310.1L432.6 313.9Z" fill="#dd8620" stroke="#6e3d05" stroke-width="0.3" stroke-linejoin="round"/>
<path d="M437.6 314.6L440.6 317.1" fill="none" stroke="#555" stroke-width="1.2" stroke-linejoin="round"/>
<path d="M441.1 312.4L444.1 314.9" fill="none" stroke="#555" stroke-width="1.2" stroke-linejoin="round"/>
<path d="M444.6 310.1L447.6 312.6" fill="none" stroke="#555" stroke-width="1.2" stroke-linejoin="round"/>
<path d="M448.1 307.9L451.1 310.4" fill="none" stroke="#555" stroke-width="1.2" stroke-linejoin="round"/>
<path d="M453.9 272.5C454.9 275 458.1 283.4 460.2 287.6C462.2 291.7 465.4 295.9 466.4 297.6" fill="none" stroke="#6e3d05" stroke-width="0.4" stroke-linejoin="round"/>
<path d="M461.4 270C462.7 272.3 466.6 280.1 468.9 283.8C471.2 287.6 474.1 291.1 475.2 292.6" fill="none" stroke="#6e3d05" stroke-width="0.4" stroke-linejoin="round"/>
<path d="M453.9 265.2L475.2 266.5L507.8 238.9L520.3 230.1L530.3 242.7L532.8 250.2L525.3 255.2L517.8 255.2L500.3 267.7L497.7 280.3L475.2 292.8L460.2 300.1L452.6 280.3Z" fill="#f99b2a" stroke="#6e3d05" stroke-width="0.5" stroke-linejoin="round"/>
<path d="M475.2 266.5L507.8 238.9L520.3 230.1L525.3 236.4L500.3 255.2L482.7 275.2Z" fill="#dd8620" opacity="0.5"/>
<path d="M522.8 212.6L530.3 206.3L537.8 208.8L540.4 217.6L547.9 220.1L550.4 228.9L540.4 238.9L530.3 242.7L520.3 231.4Z" fill="#757575" stroke="#333" stroke-width="0.4" stroke-linejoin="round"/>
<path d="M525.3 217.6L539.1 211.3" fill="none" stroke="#444" stroke-width="0.5" stroke-linejoin="round"/>
<path d="M529.1 230.1L547.9 222.6" fill="none" stroke="#444" stroke-width="0.5" stroke-linejoin="round"/>
<path d="M526.6 223.9L540.4 217.6" fill="none" stroke="#444" stroke-width="0.5" stroke-linejoin="round"/>
<path d="M453.9 246.4C455.2 243.3 459.9 239.3 462.7 236.4C465.4 233.5 466.8 231.4 470.2 228.9C473.5 226.4 478.3 224.3 482.7 221.4C487.1 218.4 492.3 214 496.5 211.3C500.7 208.6 504.2 205.9 507.8 205.1C511.3 204.2 515.1 204.6 517.8 206.3C520.5 208 522.9 212.2 524.1 215.1C525.2 218 525.4 221.4 524.8 223.9C524.2 226.4 523.1 227.6 520.3 230.1C517.5 232.6 511.9 236 507.8 238.9C503.6 241.8 500.7 243.3 495.2 247.7C489.8 252.1 479.2 261.9 475.2 265.2C471.2 268.6 473.9 268.3 471.4 267.7C468.9 267.1 462.9 263.5 460.2 261.5C457.4 259.4 455.7 257.7 454.6 255.2C453.6 252.7 452.5 249.5 453.9 246.4Z" fill="#1f1f1f" stroke="#000" stroke-width="0.4" stroke-linejoin="round"/>
<path d="M472.7 227.6C473.9 225.7 478.7 224.1 482.7 221.4C486.7 218.6 492.3 214 496.5 211.3C500.7 208.6 504.8 205.9 507.8 205.1C510.7 204.2 515.3 204.6 514 206.3C512.8 208 505.1 212 500.3 215.1C495.4 218.2 489.4 222.2 485.2 225.1C481 228 477.3 232.2 475.2 232.6C473.1 233 471.4 229.5 472.7 227.6Z" fill="#333" opacity="0.6"/>
<path d="M497.7 267.2L507.3 260.7L518.8 274.2L518.3 281.8L510.3 284.3L502.3 279.7Z" fill="#7b7b7b" stroke="#333" stroke-width="0.4" stroke-linejoin="round"/>
<path d="M513.3 258.2L525.3 252.7L537.3 267.2L536.6 275.2L528.3 277.2L519.3 270.7Z" fill="#7b7b7b" stroke="#333" stroke-width="0.4" stroke-linejoin="round"/>
<ellipse cx="513.3" cy="279" rx="3.5" ry="3.5" fill="#9a9a9a" stroke="#333" stroke-width="0.3"/>
<ellipse cx="530.3" cy="271.5" rx="3.8" ry="3.8" fill="#9a9a9a" stroke="#333" stroke-width="0.3"/>
<path d="M517.3 335.2C518.6 332.9 521.5 325 525.3 321.4C529.2 317.9 534.5 315.6 540.4 313.9C546.2 312.2 554.6 311.3 560.4 311.4C566.2 311.5 572.9 314.1 575.4 314.6" fill="none" stroke="#6e3d05" stroke-width="0.4" stroke-linejoin="round"/>
<path d="M519.8 340.2C521.1 337.8 523.7 329.3 527.3 325.7C531 322 536.1 319.8 541.6 318.1C547.1 316.5 555.2 315.6 560.4 315.6C565.6 315.6 570.8 317.7 572.9 318.1" fill="none" stroke="#6e3d05" stroke-width="0.3" stroke-linejoin="round"/>
<ellipse cx="513.3" cy="279" rx="1.3" ry="1.3" fill="#555"/>
<ellipse cx="530.3" cy="271.5" rx="1.3" ry="1.3" fill="#555"/>
<path d="M543.9 375.2C545.2 375.7 547.5 376.7 551.4 378.2C555.4 379.7 560.8 383.2 567.7 384C574.6 384.7 586 383.9 592.8 382.7C599.5 381.5 605.7 377.7 608.3 376.7" fill="none" stroke="#6e3d05" stroke-width="0.8" stroke-dasharray="0.3 0.7"/>
<path d="M467.7 267.5C468.9 269.8 472.9 277.6 475.2 281.3C477.5 285 480.4 288.2 481.5 289.6" fill="none" stroke="#6e3d05" stroke-width="0.4" stroke-linejoin="round"/>
<path d="M473.9 265.5C475.2 267.7 479.1 275.3 481.5 278.8C483.8 282.3 487.1 285.1 488.2 286.3" fill="none" stroke="#6e3d05" stroke-width="0.4" stroke-linejoin="round"/>
<!--/ORANGE-->
</svg>
</div>

<div id="titlebar" class="abs"></div>
<div id="appicon" class="abs"></div>
<div id="apptitle" class="abs">HYPER</div>
<div id="tab" class="abs"><span>• 1</span></div>
<div id="tabx" class="abs">✕</div>
<div id="tabplus" class="abs">+</div>
<div id="tabsep" class="abs"></div>
<svg class="abs" style="left:750px;top:0;width:50px;height:9px" viewBox="0 0 50 9"><path d="M4 4.2h2.4M22 3.2h2.2v2.2h-2.2zM22.8 3.2v-.6h2v2h-.6M40.2 3l2.6 2.6M42.8 3l-2.6 2.6" stroke="#333" stroke-width=".5" fill="none"/></svg>

<svg id="logo" class="abs" viewBox="0 0 66 15">
<defs><linearGradient id="lg" x1="0" x2="1" y1="0" y2="0"><stop offset="0" stop-color="#4cb8aa"/><stop offset="1" stop-color="#3d55b8"/></linearGradient></defs>
<text x="0.5" y="12.8" font-family="Liberation Sans, sans-serif" font-size="14.8" fill="url(#lg)" stroke="#ecebea" stroke-width=".35" textLength="63.5" lengthAdjust="spacingAndGlyphs">HYPER</text>
</svg>

<div id="nameinput" class="abs"><span>1</span>
<svg class="abs" style="left:63px;top:7px;width:7px;height:7px" viewBox="0 0 24 24"><path d="M3 17.2V21h3.8L17.8 9.9l-3.7-3.7zM20.7 7c.4-.4.4-1 0-1.4l-2.3-2.3c-.4-.4-1-.4-1.4 0l-1.8 1.8 3.7 3.7z" fill="#222"/></svg></div>
<div id="safepath" class="abs"><svg class="abs" style="left:7px;top:6px;width:7px;height:7px" viewBox="0 0 14 14"><path d="M2 2h3v3H2zM9 9h3v3H9zM5 3.5h4.5v2M9 10.5H4.5v-2" stroke="#1f2a44" stroke-width="1.3" fill="none"/></svg><span>Safe path</span></div>
<div id="docbtn" class="abs"><svg class="abs" style="left:6px;top:5px;width:8px;height:9px" viewBox="0 0 16 18"><path d="M2 1h8l4 4v12H2z" fill="#23407a"/><path d="M5 8h6M5 11h6M5 14h4" stroke="#fff" stroke-width="1.2"/></svg></div>

<div class="abs sqbtn" style="left:8.5px;width:37px"><svg class="abs" style="left:15px;top:5.5px;width:6px;height:6px" viewBox="0 0 6 6"><path d="M3 0v6M0 3h6" stroke="#4a8fb5" stroke-width=".7"/></svg></div>
<div class="abs sqbtn" style="left:48px;width:18px"><svg class="abs" style="left:4px;top:3px;width:9px;height:11px" viewBox="0 0 18 22"><path d="M3 6h12l-1 14H4zM1.500 5h15M6 4.500c0-2 6-2 6 0M6.500 9v8M9 9v8M11.500 9v8" stroke="#555" stroke-width="1.3" fill="#ddd"/></svg></div>
<div class="abs sqbtn" style="left:68px;width:18.500px"><svg class="abs" style="left:4px;top:4px;width:10px;height:10px" viewBox="0 0 10 10"><circle cx="4.200" cy="6" r="2.800" fill="#c9cbd6"/><rect x="3.400" y="2" width="5.600" height="5.600" rx=".6" fill="#18213f"/></svg></div>

<div class="abs pill" style="left:11px;top:74px;width:33.500px;height:13px"><span>START</span></div>
<div class="abs tick" style="top:90px"></div>
<div class="abs node" style="left:9px;top:94px;width:37px"><span style="left:3.300px">MOVE SYNC</span></div>
<div class="abs ntxt" style="left:51.400px;top:98.700px">Parallel</div>
<div class="abs tick" style="top:112px"></div>
<div class="abs node" style="left:10.500px;top:116px;width:34.500px"><span>MOVE</span><b class="ic">»</b></div>
<div class="abs ntxt" style="left:50.500px;top:117.800px">0 -72 35
-180 35 180</div>
<div class="abs tick" style="top:133.500px"></div>
<div class="abs node" style="left:10.500px;top:137.700px;width:34.500px"><span>MOVE</span><b class="ic">»</b></div>
<div class="abs ntxt" style="left:50.500px;top:139.600px">69 -22 12
 -8 -20 3</div>
<div class="abs tick" style="top:155.500px"></div>
<div class="abs node" style="left:10.500px;top:159.800px;width:34.500px"><span>PAUSE</span><svg class="abs" style="left:27.500px;top:4.500px;width:4.500px;height:5px" viewBox="0 0 9 10"><path d="M0 0h9v10H0z" fill="#2a3350"/><path d="M4.500 0v10M0 3.300h9M0 6.600h9" stroke="#f8f8f8" stroke-width=".8"/></svg></div>
<div class="abs ntxt" style="left:50.500px;top:164px">1s</div>
<div class="abs tick" style="top:177px"></div>
<div class="abs node" style="left:10.200px;top:181px;width:35px;height:15px;line-height:15px;background:#5571dc;color:#dfe5ff;box-shadow:none"><span>PICK</span><svg class="abs" style="left:27.800px;top:5px;width:5px;height:5.500px" viewBox="0 0 10 11"><path d="M0 11V5l2-2V1h1.500v1L5 0l1.500 2V1H8v2l2 2v6H7V7H3v4z" fill="#e6ebff"/></svg></div>
<div class="abs ntxt" style="left:50.200px;top:186.300px">unknown</div>
<div id="vline" class="abs"></div>
<div class="abs pill" style="left:10.500px;top:461.600px;width:34.600px;height:13.600px;line-height:14px"><span style="font-weight:normal;color:#3a4358">END</span></div>
<div class="abs ntxt" style="left:3.800px;top:473px;font-size:3.800px;line-height:4px;color:#777">fps: 90</div>

<div id="live" class="abs"><i></i><span>Live</span></div>
<div class="abs navtxt" style="left:629px">Cell</div>
<div class="abs navtxt" style="left:669px">Parts</div>
<div id="prog" class="abs"><span>Programming</span></div>
<div class="abs navtxt" style="left:771px">Run</div>

<div id="dd" class="abs"><span>M-2000iA/1700L</span><i class="caret" style="left:102.500px;top:5.800px"></i></div>
<div id="tools" class="abs">
<div class="abs" style="left:0.400px;top:1px;width:14.600px;height:14.600px;border-radius:2.500px;background:#7f8ee3"></div>
<svg class="abs" style="left:0;top:0;width:16px;height:66px" viewBox="0 0 16 66">
<path d="M5.700 6.300c0-1.300 4.200-1.300 4.200 0v4c0 1.300-4.200 1.300-4.200 0zM5.700 6.300c0 1.300 4.200 1.300 4.200 0" stroke="#fff" stroke-width=".8" fill="none"/>
<path d="M5.500 22l4.600 4.600M10.100 22l-4.600 4.600" stroke="#2a3350" stroke-width=".7"/><g fill="#2a3350"><rect x="4.800" y="21.300" width="1.600" height="1.600"/><rect x="9.300" y="21.300" width="1.600" height="1.600"/><rect x="4.800" y="25.800" width="1.600" height="1.600"/><rect x="9.300" y="25.800" width="1.600" height="1.600"/></g>
<path d="M9.500 37.800L6 40.400l3.500 2.400" stroke="#2a3350" stroke-width=".7" fill="none"/><g fill="#2a3350"><circle cx="9.600" cy="37.800" r="1"/><circle cx="5.900" cy="40.400" r="1"/><circle cx="9.600" cy="42.900" r="1.300"/><circle cx="6.800" cy="43.500" r="1"/></g>
<path d="M6.200 53v6.500M4.700 58l1.500 1.700L7.700 58M9.700 60v-6.500M8.200 55l1.500-1.700 1.500 1.700" stroke="#2a3350" stroke-width=".8" fill="none"/>
</svg></div>
<div id="panel" class="abs">
<div class="abs" style="left:5.500px;top:6.500px;font-size:8.500px;line-height:12px;font-weight:bold;color:#2d3346">Pick</div>
<div class="abs sel" style="left:5px;top:28px;width:100px;height:14.500px"><span>1</span><i class="caret" style="left:91px;top:6px;border-top-color:#444"></i></div>
<div class="abs plabel" style="left:9.500px;top:54px;font-weight:bold">Pick</div>
<div class="abs plabel" style="right:6px;top:54px;font-size:5.800px">unknown</div>
<div class="abs pgray" style="left:9.500px;top:73px">Single element</div>
<div class="abs toggle" style="left:85px;top:71.500px;background:#dfe2f6"><i style="left:10.500px;background:#8d9ce8;box-shadow:none"></i></div>
<div class="abs plabel" style="left:9.500px;top:93.500px;font-weight:bold">Pick point</div>
<div class="abs sel" style="left:5px;top:102.300px;width:81px;height:14px"><span>Default</span><i class="caret" style="left:72.500px;top:6px;border-top-color:#555"></i></div>
<div class="abs" style="left:90.400px;top:102.300px;width:15px;height:14px;background:#fdfdfd;border-radius:2px;box-shadow:0 0 1px rgba(0,0,0,.25)"><svg class="abs" style="left:4.700px;top:4.200px;width:5.600px;height:5.600px" viewBox="0 0 24 24"><path d="M3 17.200V21h3.800L17.800 9.900l-3.700-3.700zM20.700 7c.4-.4.4-1 0-1.400l-2.300-2.300c-.4-.4-1-.4-1.400 0l-1.800 1.800 3.700 3.700z" fill="#222"/></svg></div>
<div class="abs pgray" style="left:9.500px;top:129px">Avoid creases</div>
<div class="abs toggle" style="left:85px;top:127.300px"><i></i></div>
<div class="abs pgray" style="left:9.500px;top:150.300px">Skip unreachable p...</div>
<div class="abs toggle" style="left:85px;top:148.700px"><i></i></div>
<div class="abs pgray" style="left:9.500px;top:170px;line-height:7.500px">Recognize the<br>location of the part</div>
<div class="abs toggle" style="left:85px;top:172px"><i></i></div>
<div class="abs plabel" style="left:9.500px;top:195.500px;font-weight:bold;color:#454a58;line-height:7.500px">Waiting time after scanning<br>completed (sec.)</div>
<div class="abs" style="left:6.700px;top:212.700px;width:97px;height:14.600px;background:#e6e6e6;border-radius:2px"><span class="abs" style="right:6px;top:4.500px;font-size:4.600px;line-height:6px;color:#888">15</span></div>
</div>
<div id="slider" class="abs"></div>
<div class="abs pct" style="top:159.300px">– 75% –</div>
<div class="abs pct" style="top:262.300px">– 50% –</div>
<div class="abs pct" style="top:365.300px">– 25% –</div>
<svg class="abs" style="left:791px;top:344.500px;width:9px;height:13px" viewBox="0 0 9 13"><path d="M7.500 1.200L3 6.800 7.500 12.400" stroke="#bdbdbd" stroke-width="1.700" fill="none"/></svg>
<div class="abs" style="left:777px;top:456.500px;width:20px;height:20px;border-radius:10px;background:#f4f4f4;box-shadow:0 0 0 .5px #c9cdea"></div>
<div id="info" class="abs">i</div>
</body>
</html>
